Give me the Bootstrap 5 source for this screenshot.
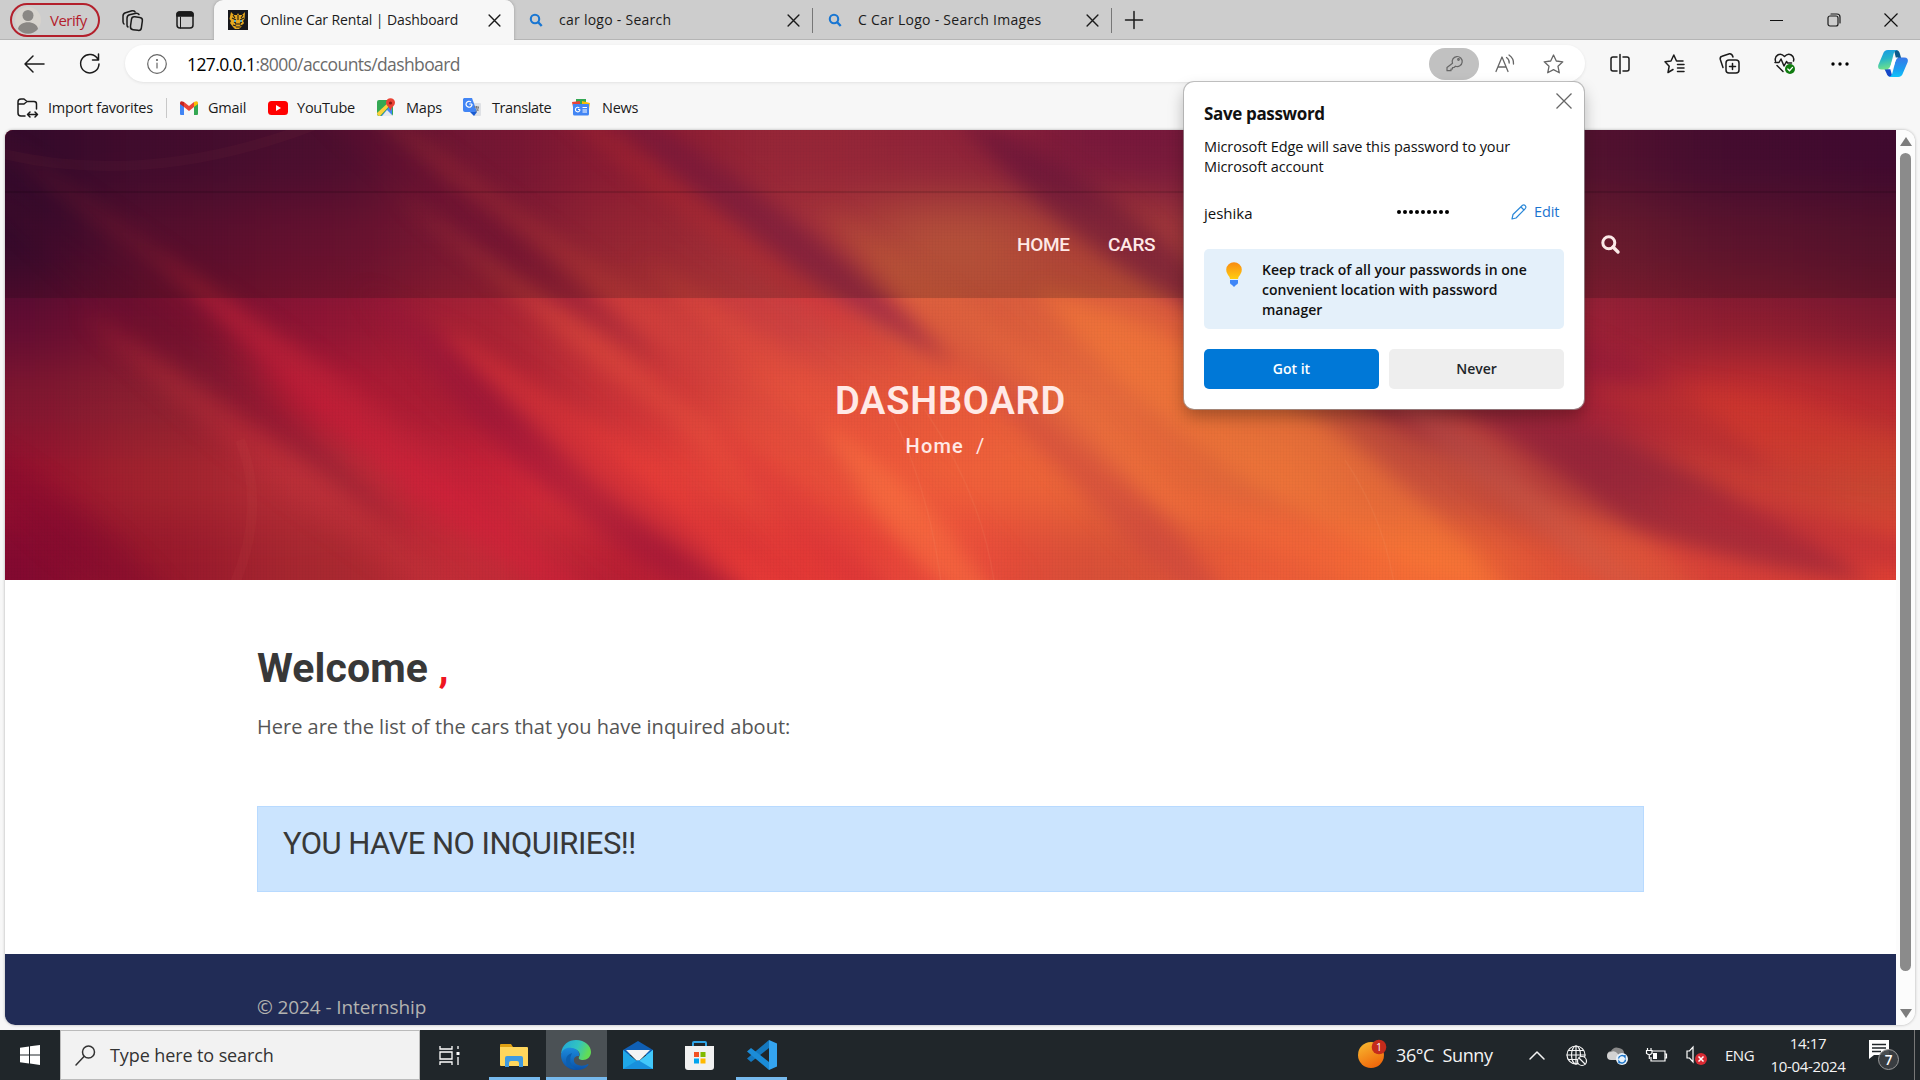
<!DOCTYPE html>
<html lang="en">
<head>
<meta charset="utf-8">
<title>Online Car Rental | Dashboard</title>
<link href="https://cdn.jsdelivr.net/npm/bootstrap@5.3.0/dist/css/bootstrap.min.css" rel="stylesheet">
<style>
  body { width: 1920px; height: 1080px; overflow: hidden; background: #f7f7f7; font-family: "Open Sans", "Noto Sans", sans-serif; font-size: 15px; color: #1b1b1b; line-height: 20px; }
  svg { display: block; flex: none; overflow: visible; }
  .ln { fill: none; stroke: currentColor; stroke-width: 1.5; stroke-linecap: round; stroke-linejoin: round; }
  .slot { flex: none; display: flex; align-items: center; justify-content: center; }
  .tx { white-space: nowrap; flex: none; }
  /* tab strip */
  .tabstrip { height: 40px; background: #cdcdcd; box-shadow: inset 0 -1px #b5b5b5; }
  .profile { width: 90px; height: 34px; margin: 0 0 0 10px; border: 2px solid #b3202c; border-radius: 17px; color: #b3202c; padding-left: 3px; gap: 9px; }
  .tab { height: 40px; font-size: 14px; letter-spacing: .26px; position: relative; }
  .tab-on { width: 300px; background: #f7f7f7; border-radius: 9px 9px 0 0; padding: 0 13px 0 14px; box-shadow: 0 0 3px #999; clip-path: inset(0 -4px 0 -4px); letter-spacing: -.1px; }
  .tab-off { width: 298px; padding: 0 12px 0 15px; }
  .tabsep { width: 1px; height: 25px; background: #777; }
  /* toolbar */
  .toolbar { height: 47px; }
  .address { width: 1460px; height: 37px; border-radius: 19px; background: #fff; margin-left: 13px; box-shadow: 0 1px 3px #e2e2e2; color: #666; }
  .url { font-size: 17.5px; letter-spacing: -.6px; color: #6b6b6b; }
  .keypill { width: 50px; height: 32px; border-radius: 16px; background: #c1c1c1; }
  .favs { height: 43px; font-size: 14.5px; letter-spacing: -.23px; padding-bottom: 2px; }
  /* page */
  .pageview { width: 1910px; height: 895px; margin-left: 5px; border-radius: 8px 12px 14px 10px; overflow: hidden; background: #fff; box-shadow: 0 0 3px #aaa; }
  .site { width: 1891px; }
  .hero { height: 450px; position: relative; font-family: Roboto, sans-serif; color: #ffe9e6; background: #b22a36; overflow: hidden; }
  .hero-art { position: absolute; inset: 0; }
  .hero-mesh { position: absolute; inset: 0; background: repeating-linear-gradient(90deg, rgba(0,0,0,.018) 0 1px, transparent 1px 3px), repeating-linear-gradient(rgba(0,0,0,.012) 0 1px, transparent 1px 3px); }
  .site-head { position: relative; height: 168px; background: rgba(18,10,14,.2); }
  .top-line { height: 63px; border-bottom: 2px solid rgba(0,0,0,.13); }
  .site-nav { height: 103px; padding-left: 1012px; font-size: 19px; font-weight: 500; letter-spacing: -.29px; }
  .hero-title { position: relative; padding-top: 80px; }
  .hero-title h1 { font-size: 38px; line-height: 46px; font-weight: 600; margin: 0; letter-spacing: .8px; }
  .crumbs { font-size: 20px; line-height: 24px; margin-top: 10px; letter-spacing: 1.2px; font-weight: 500; padding-right: 2px; }
  .inner { padding: 0 252px; }
  .welcome { font-family: Roboto, sans-serif; font-weight: 700; font-size: 41px; line-height: 48px; color: #383838; padding-top: 64px; margin: 0; letter-spacing: .1px; }
  .welcome span { color: #ef1521; }
  .intro { font-size: 20px; line-height: 30px; color: #555; margin: 20px 0 0; letter-spacing: 0; }
  .notice { height: 86px; margin-top: 64px; background: #cbe4fe; border: 1px solid #b8daff; font: 400 31px/36px Roboto, sans-serif; padding: 19px 25px; color: #383838; letter-spacing: -.52px; }
  .foot { margin-top: 62px; height: 71px; background: #212c56; color: #b3b3b0; font-size: 19px; padding-top: 42px; line-height: 22px; letter-spacing: -.1px; }
  .sbar { width: 19px; background: #fcfcfc; }
  .thumb { width: 11px; height: 818px; border-radius: 6px; background: #8b8b8b; }
  /* password popup */
  .pwd { position: absolute; left: 1184px; top: 82px; width: 400px; height: 327px; background: #fff; border-radius: 10px; box-shadow: 0 0 0 1px rgba(160,160,160,.65), 0 8px 16px rgba(0,0,0,.28); padding: 20px 20px; color: #111; }
  .pwd-x { position: absolute; right: 12px; top: 11px; }
  .tip { height: 80px; background: #e4f0fa; border-radius: 5px; padding: 11px 0 0 22px; gap: 20px; font-weight: 600; font-size: 14px; }
  .pbtn { width: 175px; height: 40px; border-radius: 5px; font-size: 14px; font-weight: 600; padding: 0 0 2px; border: 0; }
  /* taskbar */
  .taskbar { position: absolute; left: 0; top: 1030px; width: 1920px; height: 50px; background: #20262a; color: #f4f4f4; }
  .find { width: 360px; height: 50px; background: #f2f2f2; border: 1px solid #bbb; color: #333; font-size: 18px; padding-left: 14px; gap: 14px; letter-spacing: -.1px; }
  .app { height: 50px; border-bottom: 3px solid transparent; padding-top: 3px; }
  .app-run { border-bottom-color: #76b9ed; }
  .clock { width: 100px; text-align: center; font-size: 15px; line-height: 23px; letter-spacing: -.35px; }
</style>
</head>
<body>
<svg width="0" height="0" class="position-absolute">
  <defs>
    <symbol id="x" viewBox="0 0 12 12"><path d="M1 1l10 10M11 1L1 11" class="ln" style="stroke-width:1.300"/></symbol>
    <symbol id="mag" viewBox="0 0 14 16"><circle cx="6" cy="7" r="4.200" fill="none" stroke="#1976d2" stroke-width="2.100"/><path d="M9 10l3.700 4" stroke="#1976d2" stroke-width="2.400"/></symbol>
  </defs>
</svg>

<header class="d-flex align-items-center tabstrip">
  <div class="profile d-flex align-items-center">
    <svg width="26" height="26" viewBox="0 0 26 26"><circle cx="13" cy="13" r="13" fill="#d7d3cd"/><circle cx="13" cy="8.500" r="5.500" fill="#8a8784"/><path d="M3 22c1-9 19-9 20 0a13 13 0 0 1-20 0z" fill="#8a8784"/></svg>
    <span class="tx" style="letter-spacing:-.5px">Verify</span>
  </div>
  <div class="slot" style="width:65px"><svg width="21" height="21" viewBox="0 0 21 21" class="ln"><rect x="9" y="7" width="11" height="13" rx="3" transform="rotate(8 14 13)"/><path d="M6 17q-1-.5-1-2V8.500q0-3 2.600-3.700l6.400-1.600q2-.3 3 1.300M2 14q-1-.7-1-2.500V6q0-2.500 2.500-3.300L10 .8q2-.4 3 1"/></svg></div>
  <div class="slot" style="width:40px"><svg width="18" height="18" viewBox="0 0 18 18" class="ln"><rect x="1" y="1" width="16" height="16" rx="3"/><path d="M1 3.500q0-2.500 2.500-2.500h11q2.500 0 2.500 2.500V5H1z" fill="#1b1b1b"/><path d="M4.500 6v11" stroke-width="1"/></svg></div>
  <div class="tab tab-on d-flex align-items-center" style="margin-left:9px">
    <svg width="20" height="20" viewBox="0 0 20 20"><path fill="#17181c" d="M0 0h20v20H0z"/><path fill="#e8a91e" d="M3 2l3 3h3l1-2 1 2h3l3-3-.5 7-1.500 2 1 2-3 4-2 2h-4l-2-2-3-4 1-2-1.500-2z"/><path d="M4 8l4 2M16 8l-4 2M7 14h6M8 17h4M10 5v5M6 12l2 1M14 12l-2 1M5 5l2 3M15 5l-2 3M5 15l3 1M15 15l-3 1" stroke="#1b1b1b" stroke-width="1.100"/><path d="M6 11h2M12 11h2" stroke="#41b7ef" stroke-width="1.600"/></svg>
    <span class="tx ms-2 ps-1">Online Car Rental | Dashboard</span><svg width="13" height="13" class="ms-auto"><use href="#x"/></svg>
  </div>
  <div class="tab tab-off d-flex align-items-center"><svg width="14" height="16"><use href="#mag"/></svg><span class="tx ms-3">car logo - Search</span><svg width="13" height="13" class="ms-auto"><use href="#x"/></svg></div>
  <div class="tabsep"></div>
  <div class="tab tab-off d-flex align-items-center"><svg width="14" height="16"><use href="#mag"/></svg><span class="tx ms-3">C Car Logo - Search Images</span><svg width="13" height="13" class="ms-auto"><use href="#x"/></svg></div>
  <div class="tabsep"></div>
  <div class="slot" style="width:44px"><svg width="18" height="18" viewBox="0 0 18 18" class="ln"><path d="M9 .5v17M.5 9h17"/></svg></div>
  <div class="ms-auto d-flex">
    <div class="slot" style="width:57px"><svg width="13" height="13" viewBox="0 0 13 13"><path d="M0 6.500h13" stroke="#111"/></svg></div>
    <div class="slot" style="width:57px"><svg width="14" height="14" viewBox="0 0 14 14" class="ln" style="stroke-width:1.200"><rect x="1" y="3" width="10" height="10" rx="2"/><path d="M4 1h6q3 0 3 3v6"/></svg></div>
    <div class="slot" style="width:58px"><svg width="14" height="14" viewBox="0 0 14 14"><path d="M.5.5l13 13M13.500.5l-13 13" stroke="#111" stroke-width="1.200"/></svg></div>
  </div>
</header>

<div class="d-flex align-items-center toolbar">
  <div class="slot" style="width:69px"><svg width="21" height="18" viewBox="0 0 21 18" class="ln"><path d="M20 9H1M9 1L1 9l8 8"/></svg></div>
  <div class="slot" style="width:43px"><svg width="21" height="21" viewBox="0 0 21 21" class="ln" style="margin-left:-2px"><path d="M19 6.500A9.200 9.200 0 1 0 20 11M19.500 1v6h-6"/></svg></div>
  <div class="address d-flex align-items-center">
    <div class="slot" style="width:62px"><svg width="20" height="20" viewBox="0 0 20 20" class="ln" style="stroke-width:1.200;margin-left:2px"><circle cx="10" cy="10" r="9.300"/><path d="M10 9v5"/><circle cx="10" cy="6" r=".5"/></svg></div>
    <span class="url tx"><span class="text-black">127.0.0.1</span>:8000/accounts/dashboard</span>
    <div class="ms-auto slot keypill"><svg width="17" height="17" viewBox="0 0 17 17" class="ln" style="stroke-width:1.200"><path d="M6.500 8.200a5 5 0 1 1 3 3L8 12.500H6.500V14H5v1.700H1V12.500z"/><circle cx="12.500" cy="4.500" r=".8"/></svg></div>
    <div class="slot" style="width:51px"><svg width="20" height="19" viewBox="0 0 20 19" class="ln" style="stroke-width:1.300"><path d="M1 17.500L7 3l6 14.500M3 13h8M11.500 3.500q3 2 2.700 5.500M14 1q5 3.500 4.500 9"/></svg></div>
    <div class="slot" style="width:47px;margin-right:8px"><svg width="21" height="20" viewBox="0 0 21 20" class="ln" style="stroke-width:1.300"><path d="M10.500 1l2.800 6 6.500.8-4.800 4.500 1.300 6.500-5.800-3.200-5.800 3.200L6 12.300 1.200 7.800 7.700 7z"/></svg></div>
  </div>
  <div class="slot" style="width:69px"><svg width="20" height="20" viewBox="0 0 20 20" class="ln"><path d="M10 .5v19M7 3H3Q1 3 1 5v10q0 2 2 2h4M13 3h4q2 0 2 2v10q0 2-2 2h-4"/></svg></div>
  <div class="slot" style="width:41px"><svg width="21" height="20" viewBox="0 0 21 20" class="ln"><path d="M9 15.500l-5 3 1.200-6.300L1 7.800 7 7l2.800-6 2.700 6h6.500M13.500 10.500H20M13.500 14H20M13.500 17.500H20"/></svg></div>
  <div class="slot" style="width:69px"><svg width="21" height="21" viewBox="0 0 21 21" class="ln"><rect x="7" y="7" width="13" height="13" rx="3"/><path d="M13.500 10.500v6M10.500 13.500h6M4 14.500L1.300 6.500Q.7 4 3 3.300l7.500-2.500Q13 .5 14 4"/></svg></div>
  <div class="slot" style="width:41px"><svg width="21" height="21" viewBox="0 0 21 21" class="ln"><path d="M1.500 8C0 3 6-1.500 10.500 3.500 15-1.500 21 3 19.500 8M3 12.500l6 6M1 9.500h4l2-3.500 3 7 2.500-4.500 1 1.500h4"/><circle cx="16" cy="16" r="5" fill="#107c10" stroke="none"/><path d="M13.800 16l1.700 1.700 3-3.300" stroke="#fff" stroke-width="1.300"/></svg></div>
  <div class="slot" style="width:69px"><svg width="18" height="4" viewBox="0 0 18 4"><circle cx="2" cy="2" r="1.700"/><circle cx="9" cy="2" r="1.700"/><circle cx="16" cy="2" r="1.700"/></svg></div>
  <div class="slot" style="width:37px"><svg width="30" height="27" viewBox="0 0 30 27">
    <defs><linearGradient id="c1" x2=".2" y2="1"><stop stop-color="#1598e6"/><stop offset=".5" stop-color="#27b5c9"/><stop offset="1" stop-color="#6ce08c"/></linearGradient><linearGradient id="c2" x2="0" y2="1"><stop stop-color="#3a78e8"/><stop offset=".6" stop-color="#1b9df0"/><stop offset="1" stop-color="#10c3fa"/></linearGradient></defs>
    <path d="M16 0h2q3 0 4 4l1.300 4.500H18z" fill="#0a5a8c"/><path d="M6 18h6l2.500 9H13q-3.500 0-4.600-4z" fill="#1648c8"/>
    <path d="M5 4q1.200-4 5-4h9q-2.500.7-3.300 3.500L12.500 16q-1 3.500-4 3.500H3.800Q-.8 19.500.3 15z" fill="url(#c1)"/>
    <path d="M25 23q-1.200 4-5 4h-9q2.500-.7 3.300-3.500L17.500 11q1-3.500 4-3.500h4.700q4.600 0 3.500 4.500z" fill="url(#c2)"/>
    <path d="M9.500 19.300q2.200-.6 3-3.300l1.900-5.800q.8-2.700 3.500-2.700h2.600q-2.300.6-3 3.500l-1.900 5.600q-.8 2.700-3.500 2.700z" fill="#fff"/></svg></div>
</div>

<div class="d-flex align-items-center favs">
  <div class="slot" style="width:48px;padding-left:7px"><svg width="21" height="20" viewBox="0 0 21 20" class="ln"><path d="M8 18H4q-3 0-3-3V4q0-3 3-3h3l3 2.500h7q2.500 0 2.500 2.500v5M1 6h6l3-2.500M10.500 16.500h10M13 14l-2.500 2.500L13 19M18 14l2.500 2.500L18 19"/></svg></div>
  <span class="tx" style="width:118px">Import favorites</span><div style="width:14px;height:20px;border-left:1px solid #c8c8c8"></div>
  <svg width="18" height="14" viewBox="0 0 18 14"><path fill="#4285f4" d="M0 2l4 3v9H1q-1 0-1-1z"/><path fill="#34a853" d="M18 2l-4 3v9h3q1 0 1-1z"/><path fill="#ea4335" d="M4 1l5 4 5-4v5L9 10 4 6z"/><path fill="#c5221f" d="M0 2q0-3 4-1v5L0 3z"/><path fill="#fbbc04" d="M18 2q0-3-4-1v5l4-3z"/></svg>
  <span class="tx" style="width:59px;padding-left:10px;margin-right:11px">Gmail</span>
  <svg width="20" height="14" viewBox="0 0 20 14"><rect width="20" height="14" rx="3.500" fill="#f00"/><path fill="#fff" d="M8 4l5 3-5 3z"/></svg>
  <span class="tx" style="width:79px;padding-left:9px;margin-right:10px">YouTube</span>
  <svg width="18" height="19" viewBox="0 0 18 19"><rect y="2" width="16" height="16" rx="2" fill="#34a853"/><path d="M4 18L15 6v10q0 2-2 2z" fill="#4285f4"/><path d="M0 15L13 3l2 2L3 18q-3 0-3-3z" fill="#fbd13b"/><path d="M5 18l5-6 6 6z" fill="#e8eaed"/><path d="M13.500 13q-.5-3-3-5a4.500 4.500 0 1 1 6 0q-2.500 2-3 5z" fill="#ea4335"/><circle cx="13.500" cy="5" r="1.600" fill="#8c1a11"/></svg>
  <span class="tx" style="width:58px;padding-left:11px;margin-right:10px">Maps</span>
  <svg width="18" height="19" viewBox="0 0 18 19"><path d="M7 5h10q1 0 1 1v11q0 1-1 1h-6z" fill="#dfe1e5"/><path d="M1 0h8l5 14H2q-2 0-2-2V1z" fill="#4285f4"/><path d="M7 14h7l-3 4z" fill="#1b5bd0"/><path d="M9 6H6.200M9 6a3 3 0 1 1-1-2" fill="none" stroke="#fff" stroke-width="1.200"/><path d="M11 9h5M13.500 8v1q0 3 2 4M15.500 9q0 3-3 5" fill="none" stroke="#777"/></svg>
  <span class="tx" style="width:80px;padding-left:11px;margin-right:11px;letter-spacing:-.4px">Translate</span>
  <svg width="18" height="17" viewBox="0 0 18 17"><path d="M4 0h10v6H4z" fill="#34a853"/><path d="M0 3l8-1v6H1z" fill="#ea4335"/><path d="M10 2l8 2-1 6h-7z" fill="#fbbc04"/><path d="M1 5h16v10q0 1.500-1.500 1.500h-13Q1 16.500 1 15z" fill="#4285f4"/><path d="M8 10.500H6M8 10.500a2.300 2.300 0 1 1-.7-1.600M10.500 8.500H15M10.500 11H15M10.500 13H15" fill="none" stroke="#fff" stroke-width="1.100"/></svg>
  <span class="tx" style="padding-left:12px">News</span>
</div>

<main class="pageview d-flex">
  <div class="site">
    <section class="hero">
      <svg class="hero-art" width="1892" height="450" viewBox="0 0 1892 450" preserveAspectRatio="none">
        <defs><filter id="b1" filterUnits="userSpaceOnUse" x="-300" y="-300" width="2500" height="1050" color-interpolation-filters="sRGB"><feGaussianBlur stdDeviation="44 26"/></filter><filter id="b2" filterUnits="userSpaceOnUse" x="-300" y="-300" width="2500" height="1050" color-interpolation-filters="sRGB"><feGaussianBlur stdDeviation="10"/></filter></defs>
        <g id="wash" filter="url(#b1)"></g>
        <g id="rays" filter="url(#b2)"></g>
        <g fill="none" stroke="#ff8a70" stroke-opacity=".045" stroke-width="10"><path d="M-10 22Q140 60 310 -5"/><path d="M235 310q28 70-8 150"/></g>
        <g fill="none" stroke="#ffb080" stroke-opacity=".09" stroke-width="1.500"><path d="M885 280q40 80 52 180M920 280q60 90 70 180M1340 330q40 60 50 130"/></g>
      </svg>
      <div class="hero-mesh"></div>
      <div class="site-head">
        <div class="top-line"></div>
        <nav class="site-nav d-flex align-items-center"><span class="tx" style="width:91px">HOME</span><span class="tx">CARS</span>
          <svg width="19" height="19" viewBox="0 0 19 19" style="margin-left:auto;margin-right:276px"><circle cx="7.800" cy="7.800" r="6" fill="none" stroke="#fbe9e7" stroke-width="3"/><path d="M12 12l5 5" stroke="#fbe9e7" stroke-width="3.400" stroke-linecap="round"/></svg></nav>
      </div>
      <div class="hero-title text-center"><h1>DASHBOARD</h1><div class="crumbs"><span>Home</span><span class="fw-normal ms-2 ps-1 pe-2">/</span></div></div>
    </section>
    <section class="inner">
      <h2 class="welcome">Welcome <span>,</span></h2>
      <p class="intro">Here are the list of the cars that you have inquired about:</p>
      <div class="notice">YOU HAVE NO INQUIRIES!!</div>
    </section>
    <footer class="foot inner" style="padding-top:42px">© 2024 - Internship</footer>
  </div>
  <div class="sbar d-flex flex-column align-items-center">
    <svg width="14" height="9" viewBox="0 0 14 9" style="margin:7px 0 7px"><path d="M7 0l6 9H1z" fill="#7d7d7d"/></svg>
    <div class="thumb"></div>
    <svg width="14" height="9" viewBox="0 0 14 9" style="margin-top:38px"><path d="M7 9l6-9H1z" fill="#7d7d7d"/></svg>
  </div>
</main>

<aside class="pwd">
  <svg class="pwd-x" width="16" height="16" viewBox="0 0 16 16"><path d="M.5.5l15 15M15.500.5l-15 15" stroke="#666" stroke-width="1.300"/></svg>
  <div class="tx" style="font-size:17px;font-weight:700;line-height:24px;letter-spacing:-.35px">Save password</div>
  <div class="tx" style="margin-top:11px;font-size:14.500px;letter-spacing:-.1px">Microsoft Edge will save this password to your<br>Microsoft account</div>
  <div class="d-flex align-items-center" style="height:40px;margin-top:15px"><span class="tx" style="width:193px;padding-top:1px">jeshika</span>
    <svg width="54" height="6" viewBox="0 0 54 6"><g fill="#000"><circle cx="2" cy="3" r="2"/><circle cx="8" cy="3" r="2"/><circle cx="14" cy="3" r="2"/><circle cx="20" cy="3" r="2"/><circle cx="26" cy="3" r="2"/><circle cx="32" cy="3" r="2"/><circle cx="38" cy="3" r="2"/><circle cx="44" cy="3" r="2"/><circle cx="50" cy="3" r="2"/></g></svg>
    <svg width="16" height="16" viewBox="0 0 16 16" class="ln" style="margin:0 7px 0 60px;color:#2b88d8;stroke-width:1.200"><path d="M1 15l1-4.500L11.500 1.300q1.500-1 2.700.3t.3 2.700L5 14zM10 3l3 3"/></svg><span class="tx" style="color:#1a74d0;font-size:14.500px;letter-spacing:-.1px">Edit</span></div>
  <div class="tip d-flex" style="margin-top:17px">
    <svg width="16" height="25" viewBox="0 0 16 25" style="margin-top:2px"><defs><linearGradient id="bl" x2="0" y2="1"><stop stop-color="#f98b12"/><stop offset="1" stop-color="#ffcd0f"/></linearGradient></defs><path d="M4 17q0-2-2-4A7.800 7.800 0 1 1 14 13q-2 2-2 4z" fill="url(#bl)"/><path d="M4 18h8v3q0 1-2 2l-2 2-2-2q-2-1-2-2z" fill="#3f86f7"/></svg>
    <div class="tx">Keep track of all your passwords in one<br>convenient location with password<br>manager</div>
  </div>
  <div class="d-flex justify-content-between" style="margin-top:20px"><button class="btn pbtn text-white" style="background:#0078d7">Got it</button><button class="btn pbtn" style="background:#eee">Never</button></div>
</aside>

<footer class="taskbar d-flex align-items-center">
  <div class="slot" style="width:60px"><svg width="20" height="20" viewBox="0 0 20 20" fill="#fff"><path d="M0 2.800l9-1.300v8H0zM10 1.300L20 0v9.500H10zM0 10.500h9v8l-9-1.300zM10 10.500h10V20l-10-1.400z"/></svg></div>
  <div class="find d-flex align-items-center"><svg width="21" height="21" viewBox="0 0 21 21" class="ln"><circle cx="13.500" cy="7" r="6"/><path d="M9 11.500L1 20"/></svg><span class="tx">Type here to search</span></div>
  <div class="slot" style="width:59px"><svg width="21" height="19" viewBox="0 0 21 19" fill="none" stroke="#fff" stroke-width="1.300"><path d="M1 0v3h12V0M1 19v-3h12v3M1 6h12v7H1zM19 0v3M19 11v8"/><path d="M17.500 6h3v3h-3z" fill="#fff" stroke="none"/></svg></div>
  <div style="width:10px"></div>
  <div class="slot app app-run" style="width:51px;margin-right:6px"><svg width="28" height="23" viewBox="0 0 28 23" style="margin-right:2px"><path d="M0 1q0-1 1-1h10l2 3v8H0z" fill="#dfa012"/><path d="M0 3h27q1 0 1 1v18H1q-1 0-1-1z" fill="#ffd65c"/><path d="M5 23V14q0-2 2-2h14q2 0 2 2v9h-4v-4q0-2-2-2h-6q-2 0-2 2v4z" fill="#3f9ae0"/></svg></div>
  <div class="slot app app-run" style="width:61px;background:#4b5155"><svg width="30" height="30" viewBox="0 0 30 30" style="margin-right:1px"><defs><linearGradient id="e1" x2="1" y2=".3"><stop stop-color="#1fa3dc"/><stop offset=".6" stop-color="#32c4c0"/><stop offset="1" stop-color="#62dc55"/></linearGradient><linearGradient id="e2" x2="0" y2="1"><stop stop-color="#1c8bdc"/><stop offset="1" stop-color="#0a51a8"/></linearGradient></defs><path d="M0 14C1 4 8 0 15 0c9 0 15 6 15 12 0 5-4 8-8 8-3 0-5-1-4-3 2-3 0-7-5-8Q4 8 0 14z" fill="url(#e1)"/><path d="M0 15C1 9 6 7 11 8c5 .5 8 4 7 8-5-1-7 5-3 8 4 2.500 8 2 12 0q1 0 0 1.500C24 29 20 30 15 30 6 30 0 23 0 15z" fill="url(#e2)"/><path d="M11 13q-5 9 3 16Q5 28 5 20q0-5 6-7z" fill="#0c5fae"/></svg></div>
  <div class="slot app" style="width:61px"><svg width="30" height="28" viewBox="0 0 30 28"><path d="M0 9L15 0l15 9v5H0z" fill="#0f5fb5"/><path d="M3 9h24l-12 12z" fill="#f4f4f4"/><path d="M0 9l15 12L30 9v19H0z" fill="#1fa7e8"/><path d="M30 9v19L15 21z" fill="#42c8fa"/><path d="M0 28l15-9 15 9z" fill="#1890dc"/></svg></div>
  <div class="slot app" style="width:62px"><svg width="29" height="29" viewBox="0 0 29 29"><path d="M8 6V2q0-1 1-1h11q1 0 1 1v4" fill="none" stroke="#2fa5e8" stroke-width="2"/><path d="M0 5h29v21q0 3-3 3H3q-3 0-3-3z" fill="#f1f1f1"/><path d="M9 11h5v5H9z" fill="#f25022"/><path d="M15.500 11h5v5h-5z" fill="#7fba00"/><path d="M9 17.500h5v5H9z" fill="#00a4ef"/><path d="M15.500 17.500h5v5h-5z" fill="#ffb900"/></svg></div>
  <div class="slot app app-run" style="width:51px;margin-left:6px"><svg width="30" height="30" viewBox="0 0 30 30"><path d="M22 8L4 22l-4-3.500L22 0z" fill="#1478bf"/><path d="M22 22L4 8l-4 3.500L22 30z" fill="#1b8cd8"/><path d="M22 0l8 3.500v23L22 30z" fill="#34a4f0"/></svg></div>
  <div class="ms-auto d-flex align-items-center h-100">
    <svg width="30" height="32" viewBox="0 0 30 32"><defs><linearGradient id="sun" x2=".5" y2="1"><stop stop-color="#f8bd32"/><stop offset="1" stop-color="#f06a0c"/></linearGradient></defs><circle cx="13" cy="16" r="13" fill="url(#sun)"/><circle cx="21" cy="8" r="7.300" fill="#c42b1c"/><text x="21" y="12" font-size="10.500" fill="#fff" text-anchor="middle">1</text></svg>
    <span class="tx" style="width:136px;padding-left:8px;font-size:18px;letter-spacing:-.4px;white-space:pre">36°C  Sunny</span>
    <div class="slot" style="width:34px"><svg width="16" height="9" viewBox="0 0 16 9" class="ln" style="margin-right:8px"><path d="M1 8l7-7 7 7"/></svg></div>
    <div class="slot" style="width:41px;padding-left:3px;margin-right:4px"><svg width="21" height="21" viewBox="0 0 21 21" class="ln" style="stroke-width:1.200;margin-left:-7px"><circle cx="10" cy="10" r="9"/><ellipse cx="10" cy="10" rx="4.500" ry="9"/><path d="M1 10h18M2.500 5.500h15M2.500 14.500H12M10 1v18"/><circle cx="16" cy="16" r="4.500" fill="#20262a"/><path d="M13 13l6 6"/></svg></div>
    <div class="slot" style="width:40px"><svg width="21" height="20" viewBox="0 0 21 20" style="margin-left:-12px"><path d="M5 14a4 4 0 0 1-1-8q3-5 8-3 5 1 5 5v6z" fill="#8a8a8a"/><path d="M4 15a4 4 0 0 1 0-8q4-2 7 2l1 6z" fill="#d2d2d2"/><circle cx="15" cy="14" r="6" fill="#e9f3fc"/><path d="M11.500 13.500a3.600 3.600 0 0 1 6.500-1.500v-2M18.500 14.500a3.600 3.600 0 0 1-6.500 2v2" fill="none" stroke="#1a73c7" stroke-width="1.400"/></svg></div>
    <div class="slot" style="width:40px"><svg width="21" height="15" viewBox="0 0 21 15" fill="none" stroke="#fff" stroke-width="1.200" style="margin-left:-13px"><path d="M6 3h13v10H5V9M19 6h1.500v4H19M1.500 0v2M5 0v2M.5 2.500h5.500v3L3.300 7 .5 5.500zM3.300 7v4"/><path d="M7 5h4v6H7z" fill="#fff" stroke="none"/></svg></div>
    <div class="slot" style="width:42px"><svg width="21" height="19" viewBox="0 0 21 19" style="margin-left:-16px"><path d="M1 5h2.500L7 1v15l-3.500-4H1z" fill="none" stroke="#fff" stroke-width="1.200"/><circle cx="15" cy="13" r="6" fill="#d92a33"/><path d="M12.500 10.500l5 5M17.500 10.500l-5 5" stroke="#fff" stroke-width="1.500"/></svg></div>
    <span class="tx" style="width:33px;font-size:15px;letter-spacing:-.5px">ENG</span>
    <div class="clock">14:17<br>10-04-2024</div>
    <div class="slot" style="width:45px;margin-left:11px;justify-content:flex-start"><svg width="31" height="31" viewBox="0 0 31 31"><path d="M0 0h20v15H5l-5 4z" fill="#fff"/><path d="M3 4.500h14M3 8h14M3 11.500h9" stroke="#20262a" stroke-width="1.500"/><circle cx="19.500" cy="19.500" r="10" fill="#3b4043" fill-opacity=".93" stroke="#999"/><text x="19.500" y="24.500" font-size="13.500" font-weight="600" fill="#fff" text-anchor="middle">7</text></svg></div>
    <div style="width:6px;height:50px;border-left:1px solid #777"></div>
  </div>
</footer>

<script>
  // Banner artwork: a soft colour wash with diagonal light rays over it.
  const wash = [
    '3c0a32 4e0d35 5a0f37 8c193c aa203c b82e42 af2a44 921c46 8c1e46 781a3c 621337 500d37 4b0a37',
    '3c0a32 690f35 7a1337 961c3c b82d3c cb3c46 e06545 d24b41 b43c50 a02840 7e2035 6e1635 641432',
    '600c32 78102e 8e1434 a82234 cc3c3a cc4040 d85a3c e0643c d85038 c83c38 9a2036 8c1c30 7c1830',
    '801630 8c2030 b01a34 a81c34 cc3438 e4503c e8583a e66a3c cc5c38 a83a38 a42038 c83030 b82830',
    '98102e a4242e b82e38 c82038 e43c38 e84c3a f0603a ec6838 e0683a c8503c a83038 c83c34 c84832',
    '820830 98182c a82830 c42c38 b81e34 e43836 e8483a d85038 ec5c38 f06a34 e05038 d84038 e04034'];
  const rect = (x, y, w, h, c) => `<rect x="${x}" y="${y}" width="${w}" height="${h}" fill="#${c}"/>`;
  let out = '';
  wash.forEach((row, j) => row.split(' ').forEach((c, i) => {
    const x0 = i ? i * 158 - 79 : -300, x1 = i < 12 ? i * 158 + 80 : 2200;
    const y0 = j ? j * 80 - 10 : -300, y1 = j < 5 ? j * 80 + 71 : 750;
    out += rect(x0, y0, x1 - x0, y1 - y0, c);
  }));
  document.getElementById('wash').innerHTML = out;
  // x1, y1, x2, y2, width, colour, opacity; each ray tapers to a point at both ends
  const rays = [
    [228,187,560,460,44,'d4203a',.5],[60,60,416,323,18,'a82838',.35],[20,90,330,340,36,'5c0c30',.25],
    [637,0,890,190,40,'8a1a48',.6],[600,10,850,200,26,'d83038',.45],[395,0,700,240,22,'d03c3c',.4],
    [350,0,600,190,36,'780f38',.35],[430,220,716,460,70,'98143a',.5],[500,250,775,470,44,'f04038',.5],
    [490,140,900,460,24,'f05840',.35],[700,180,960,400,44,'f0553c',.3],[740,330,890,480,40,'d83038',.45],
    [850,330,985,480,44,'ff7a42',.5],[955,200,1200,460,48,'c84440',.5],[880,130,1150,360,40,'f07840',.35],
    [1000,20,1200,170,50,'701244',.5],[1110,210,1430,420,90,'ff8238',.42],
    [1370,255,1770,415,80,'8c203a',.6],[1530,200,1720,310,44,'8c1838',.35],
    [1480,310,1700,480,40,'e0603c',.4],[1400,270,1640,470,30,'d0624c',.45],[1640,270,1900,330,60,'d8402c',.35],
    [1700,380,1920,430,40,'b42838',.45],[1200,380,1520,480,44,'ff7038',.3],
    [150,240,450,470,36,'c8363c',.3],[-20,330,160,480,50,'7c0430',.3],
    [560,120,820,320,24,'dc4a40',.3]];
  document.getElementById('rays').innerHTML = rays.map(([a, b, c, d, w, col, o]) => {
    const len = Math.hypot(c - a, d - b), ux = (c - a) / len, uy = (d - b) / len, e = len * .25;
    const sx = a - ux * e, sy = b - uy * e, ex = c + ux * e, ey = d + uy * e;
    const mx = (a + c) / 2, my = (b + d) / 2;
    const f = n => n.toFixed(1);
    return `<path d="M${f(sx)} ${f(sy)}Q${f(mx - uy * w)} ${f(my + ux * w)} ${f(ex)} ${f(ey)}Q${f(mx + uy * w)} ${f(my - ux * w)} ${f(sx)} ${f(sy)}" fill="#${col}" fill-opacity="${o}"/>`;
  }).join('');
</script>
<script src="https://cdn.jsdelivr.net/npm/bootstrap@5.3.0/dist/js/bootstrap.bundle.min.js"></script>
</body>
</html>
